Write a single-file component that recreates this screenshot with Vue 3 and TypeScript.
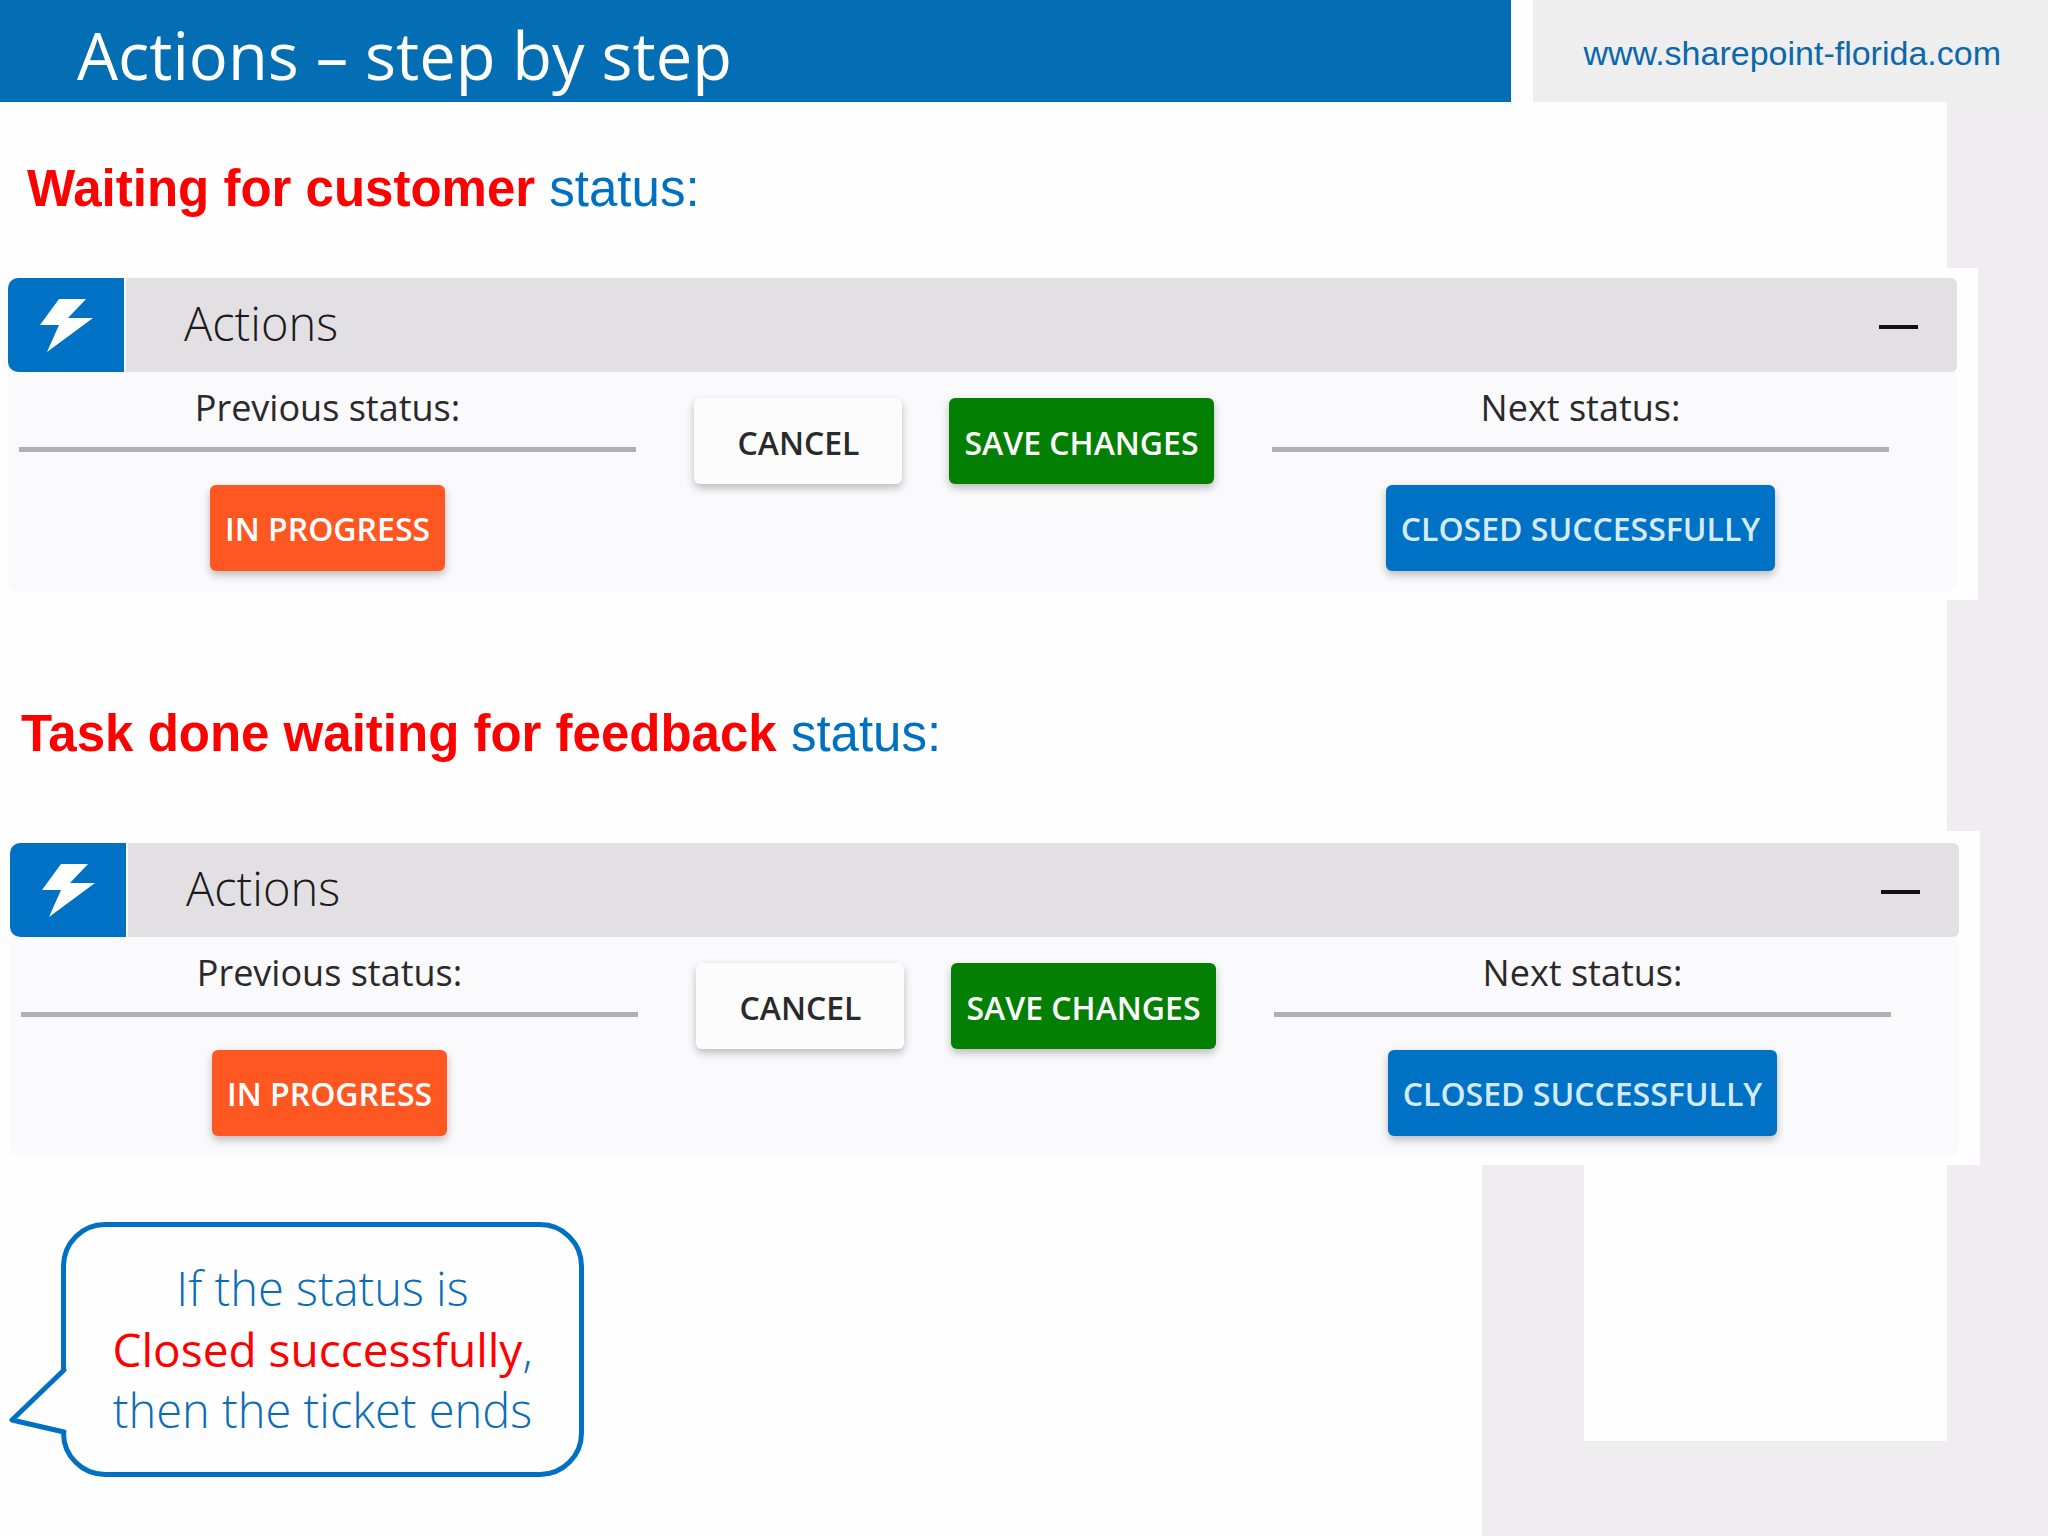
<script setup lang="ts">
interface StatusSection {
  id: string
  status: string
  variant: string
}

const sections: StatusSection[] = [
  { id: 'waiting', status: 'Waiting for customer', variant: 'first' },
  { id: 'done', status: 'Task done waiting for feedback', variant: 'second' },
]
</script>

<template>
  <div class="slide">
    <header class="top">
      <h1 class="title">Actions – step by step</h1>
      <div class="site"><a href="#">www.sharepoint-florida.com</a></div>
    </header>

    <main class="board">
      <section v-for="s in sections" :key="s.id" :class="s.variant">
        <h2 class="heading"><strong>{{ s.status }}</strong> status:</h2>
        <div class="frame">
          <div class="bar">
            <div class="badge">
              <svg width="54" height="54" viewBox="0 0 54 54" aria-hidden="true">
                <path d="M20 1H47L29 20H54L8 54L20 27H1Z" fill="#fff" />
              </svg>
            </div>
            <div class="bar-main">
              <h3 class="bar-title">Actions</h3>
              <button class="collapse" type="button" aria-label="Collapse"><span></span></button>
            </div>
          </div>
          <div class="card">
            <div class="col">
              <p class="label">Previous status:</p>
              <button class="btn orange" type="button">IN PROGRESS</button>
            </div>
            <div class="mid">
              <button class="btn plain" type="button">CANCEL</button>
              <button class="btn green" type="button">SAVE CHANGES</button>
            </div>
            <div class="col">
              <p class="label">Next status:</p>
              <button class="btn blue" type="button">CLOSED SUCCESSFULLY</button>
            </div>
          </div>
        </div>
      </section>
    </main>

    <footer class="lower">
      <div class="note-area">
        <div class="bubble">
          <svg class="tail" width="60" height="72" viewBox="0 0 60 72" aria-hidden="true">
            <path d="M58 6L55 4L3 54L55 66L58 65Z" fill="#fefefe" />
            <path d="M55 4L3 54L55 66" fill="none" stroke="#0070c5" stroke-width="5" stroke-linejoin="round" stroke-linecap="round" />
          </svg>
          <p>If the status is<br /><em>Closed successfully</em>,<br />then the ticket ends</p>
        </div>
      </div>
      <div class="window"></div>
    </footer>
  </div>
</template>

<style>
body {
  margin: 0;
}
</style>

<style scoped>
.slide {
  display: flex;
  flex-direction: column;
  min-height: 100vh;
  background: #efedf0;
  font-family: "Open Sans", "Noto Sans", sans-serif;
}

h1, h2, h3, p {
  margin: 0;
}

.top {
  display: flex;
  gap: 22px;
  height: 102px;
  background: #fefefe;
}

.title {
  flex: 1;
  box-sizing: border-box;
  padding: 8px 0 0 77px;
  background: #036eb4;
  color: #fff;
  font-size: 65px;
  line-height: 94px;
  font-weight: 400;
}

.site {
  box-sizing: border-box;
  width: 515px;
  padding: 33px 47px 0 0;
  background: #efeeee;
  text-align: right;
}

.site a {
  color: #0a68ab;
  font: 34px/40px "Liberation Sans", Arial, sans-serif;
  text-decoration: none;
}

.board {
  background: linear-gradient(#fefefe, #fefefe) no-repeat left / calc(100% - 101px) 100%;
}

.heading {
  color: #0070c0;
  font: 51px/58px "Liberation Sans", Arial, sans-serif;
}

.heading strong {
  color: #fe0000;
}

.first .heading {
  padding: 58px 0 50px 27px;
}

.second .heading {
  padding: 105px 0 68px 21px;
}

.frame {
  background: #fefefe;
}

.first .frame {
  margin-right: 70px;
  padding: 10px 21px 8px 8px;
}

.second .frame {
  margin-right: 68px;
  padding: 12px 21px 8px 10px;
}

.bar {
  display: flex;
  gap: 2px;
  height: 94px;
}

.badge {
  display: flex;
  align-items: center;
  justify-content: center;
  width: 116px;
  border-radius: 10px 0 0 10px;
  background: #0072c6;
}

.bar-main {
  flex: 1;
  display: flex;
  align-items: center;
  justify-content: space-between;
  padding: 0 39px 0 58px;
  border-radius: 0 6px 6px 0;
  background: #e2e0e3;
}

.bar-title {
  padding-bottom: 4px;
  color: #1b1b1b;
  font-size: 47px;
  line-height: 90px;
  font-weight: 300;
}

.collapse {
  padding: 24px 0 20px;
  border: 0;
  background: none;
}

.collapse span {
  display: block;
  width: 39px;
  height: 4px;
  background: #111;
}

.card {
  display: grid;
  grid-template-columns: 617fr 636fr 617fr;
  padding: 12px 68px 21px 11px;
  border-radius: 0 0 10px 10px;
  background: #faf9fb;
}

.col {
  display: flex;
  flex-direction: column;
  align-items: center;
  gap: 33px;
}

.label {
  align-self: stretch;
  padding-bottom: 15px;
  border-bottom: 5px solid #b0afb1;
  color: #2a2a2a;
  font-size: 36px;
  line-height: 48px;
  font-weight: 400;
  text-align: center;
}

.mid {
  display: flex;
  align-items: flex-start;
  justify-content: center;
  gap: 47px;
  padding-top: 14px;
}

.btn {
  height: 86px;
  padding: 0 15px;
  border: 0;
  border-radius: 6px;
  box-shadow: 0 4px 8px rgba(0, 0, 0, 0.25);
  color: #fff;
  font-family: inherit;
  font-size: 32px;
  font-weight: 600;
  white-space: nowrap;
}

.orange {
  background: #ff5722;
}

.green {
  background: #038003;
}

.blue {
  background: #0072c6;
  color: #d5ebfb;
}

.plain {
  min-width: 208px;
  background: #fcfcfd;
  color: #2a2a2a;
}

.mid .btn {
  padding-top: 2px;
}

.lower {
  flex: 1;
  display: flex;
  gap: 102px;
  padding-right: 101px;
}

.note-area {
  flex: 1;
  padding: 57px 0 59px 61px;
  background: #fefefe;
}

.bubble {
  position: relative;
  box-sizing: border-box;
  width: 523px;
  padding: 31px 0;
  border: 5px solid #0070c5;
  border-radius: 44px;
  color: #0a6dba;
  font-size: 47px;
  line-height: 61px;
  font-weight: 300;
  text-align: center;
}

.bubble em {
  color: #fe0000;
  font-size: 46px;
  font-style: normal;
  font-weight: 400;
}

.tail {
  position: absolute;
  left: -57px;
  top: 139px;
}

.window {
  width: 363px;
  margin-bottom: 95px;
  background: #fefefe;
}
</style>
